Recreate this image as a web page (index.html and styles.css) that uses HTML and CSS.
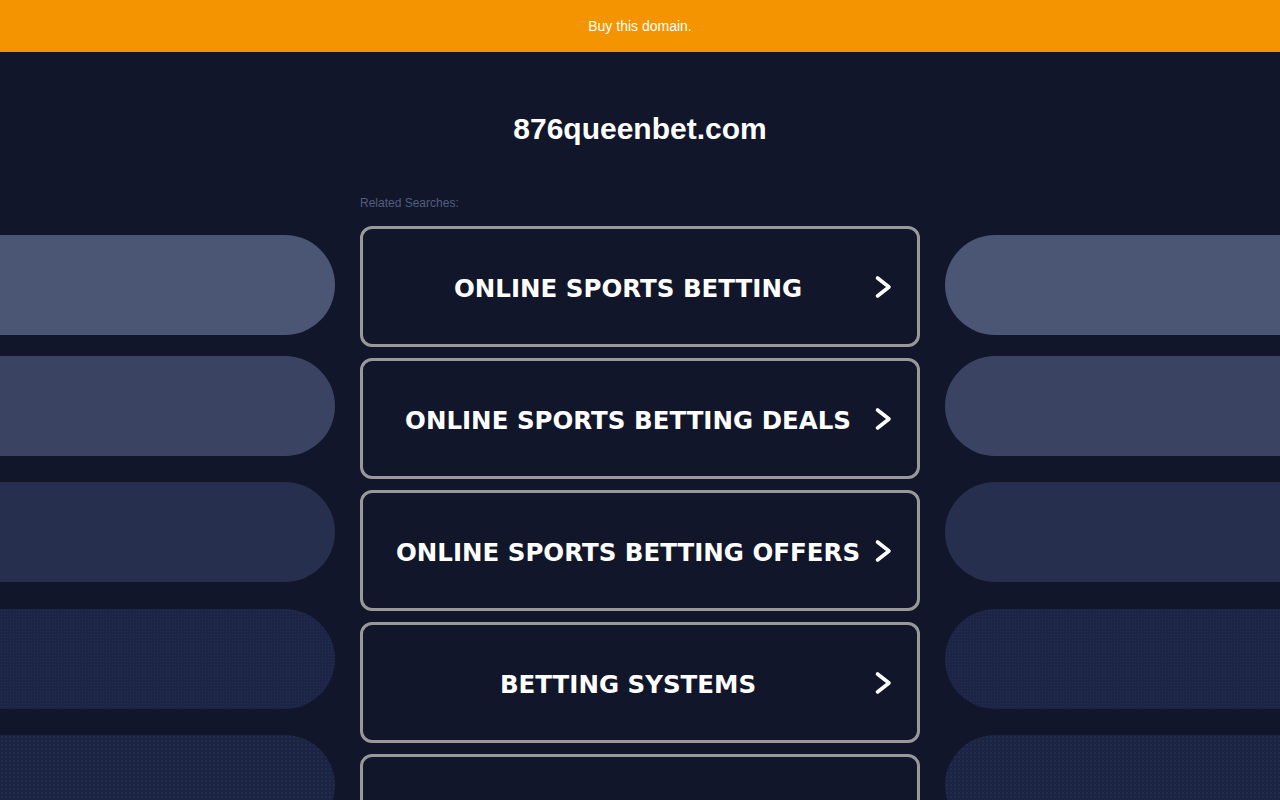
FILE: index.html
```html
<!DOCTYPE html>
<html lang="en">
<head>
<meta charset="utf-8">
<title>876queenbet.com</title>
<link rel="stylesheet" href="styles.css">
</head>
<body>
<div class="topbar">Buy this domain.</div>
<h1 class="title">876queenbet.com</h1>
<div class="layout">
  <div class="side side-left">
    <div class="pill p1"></div>
    <div class="pill p2"></div>
    <div class="pill p3"></div>
    <div class="pill p4"></div>
    <div class="pill p5"></div>
  </div>
  <div class="center">
    <div class="related">Related Searches:</div>
    <a class="result" href="#"><span class="label">ONLINE SPORTS BETTING</span><svg class="chev" viewBox="0 0 24 24"><path d="M8.5 3 L20 12 L8.5 21"/></svg></a>
    <a class="result" href="#"><span class="label">ONLINE SPORTS BETTING DEALS</span><svg class="chev" viewBox="0 0 24 24"><path d="M8.5 3 L20 12 L8.5 21"/></svg></a>
    <a class="result" href="#"><span class="label">ONLINE SPORTS BETTING OFFERS</span><svg class="chev" viewBox="0 0 24 24"><path d="M8.5 3 L20 12 L8.5 21"/></svg></a>
    <a class="result" href="#"><span class="label">BETTING SYSTEMS</span><svg class="chev" viewBox="0 0 24 24"><path d="M8.5 3 L20 12 L8.5 21"/></svg></a>
    <a class="result" href="#"><span class="label"></span></a>
  </div>
  <div class="side side-right">
    <div class="pill p1"></div>
    <div class="pill p2"></div>
    <div class="pill p3"></div>
    <div class="pill p4"></div>
    <div class="pill p5"></div>
  </div>
</div>
</body>
</html>
```

FILE: styles.css
```css
html, body {
  margin: 0;
  padding: 0;
  height: 100%;
  overflow: hidden;
}
body {
  background: #11162b;
  font-family: "Liberation Sans", Arial, sans-serif;
  color: #fff;
}
.topbar {
  height: 52px;
  background: #f39400;
  color: #fff;
  font-size: 14px;
  line-height: 52px;
  text-align: center;
}
.title {
  margin: 59px 0 0;
  height: 36px;
  line-height: 36px;
  font-size: 30px;
  font-weight: bold;
  text-align: center;
  color: #fff;
}
.layout {
  margin-top: 48px;
  display: grid;
  grid-template-columns: 335px 560px 335px;
  column-gap: 25px;
}
.side {
  display: flex;
  flex-direction: column;
  padding-top: 40px;
}
.pill {
  height: 100px;
  flex: none;
}
.side-left .pill { border-radius: 0 50px 50px 0; }
.side-right .pill { border-radius: 50px 0 0 50px; }
.p1 { background: #4b5674; margin-bottom: 21px; }
.p2 { background: #3a4462; margin-bottom: 26px; }
.p3 { background: #262f4e; margin-bottom: 27px; }
.p4 {
  background-color: #1c2545;
  background-image: radial-gradient(circle, rgba(60, 75, 115, 0.25) 0.5px, transparent 0.8px);
  background-size: 3px 3px;
  margin-bottom: 26px;
}
.p5 {
  background-color: #1b2443;
  background-image: radial-gradient(circle, rgba(55, 70, 110, 0.35) 0.6px, transparent 0.9px);
  background-size: 4px 4px;
}
.center {
  display: flex;
  flex-direction: column;
}
.related {
  font-size: 12px;
  line-height: 14px;
  color: #525d7f;
  padding-top: 1px;
  margin-bottom: 16px;
}
.result {
  box-sizing: border-box;
  height: 121px;
  margin-bottom: 11px;
  border: 3px solid #999;
  border-radius: 12px;
  display: flex;
  align-items: center;
  padding: 0 24px;
  text-decoration: none;
  color: #fff;
  flex: none;
}
.label {
  flex: 1;
  text-align: center;
  font-family: "DejaVu Sans", Verdana, sans-serif;
  font-weight: bold;
  font-size: 24.5px;
  white-space: nowrap;
  padding-top: 3px;
}
.chev {
  width: 24px;
  height: 24px;
  flex: none;
  margin-top: 1px;
}
.chev path {
  fill: none;
  stroke: #fff;
  stroke-width: 3.6;
  stroke-linecap: round;
  stroke-linejoin: round;
}
```
